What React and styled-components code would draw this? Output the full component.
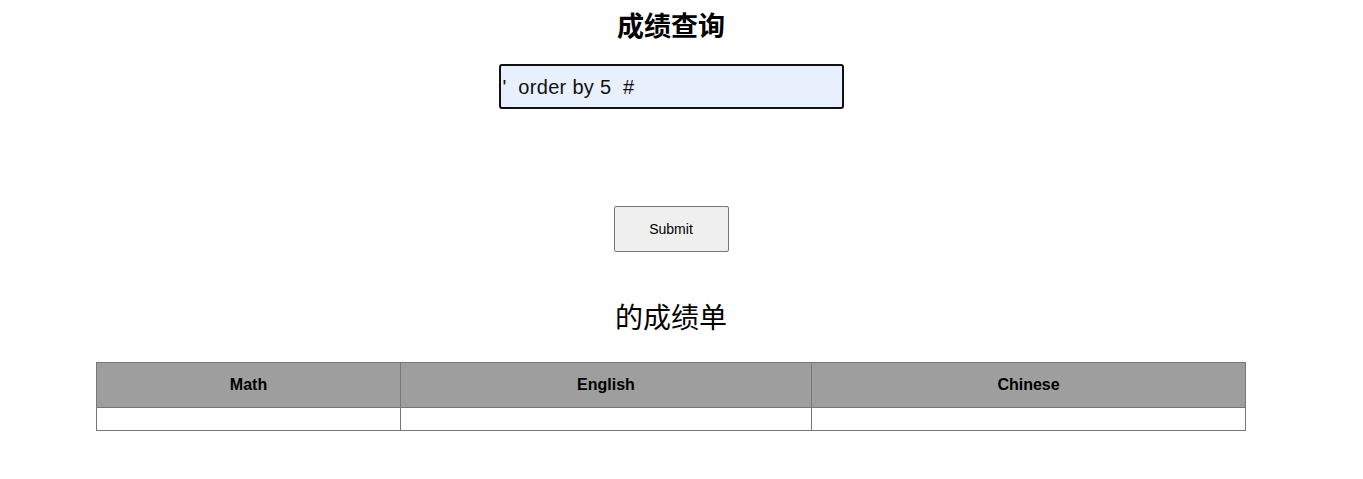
import React from "react";
import styled, { createGlobalStyle } from "styled-components";

const Global = createGlobalStyle`
  html, body { margin: 0; padding: 0; background: #fff; }
  body { font-family: "Liberation Sans", Arial, "Noto Sans CJK SC", sans-serif; color: #000; }
`;

const Page = styled.div`
  width: 1342px;
  display: flex;
  flex-direction: column;
  align-items: center;
`;

const Title = styled.h1`
  margin: 7px 0 0;
  font-family: "Noto Sans CJK SC", sans-serif;
  font-size: 27px;
  font-weight: 700;
  line-height: 36px;
`;

const QueryInput = styled.input`
  box-sizing: border-box;
  margin-top: 21px;
  width: 345px;
  height: 45px;
  padding: 1px 2px 0;
  border: 2px solid #111;
  border-radius: 3px;
  background: #e8f0fe;
  font-family: "Liberation Sans", Arial, sans-serif;
  font-size: 20px;
  letter-spacing: 0.3px;
  color: #111;
  outline: none;
`;

const SubmitButton = styled.button`
  box-sizing: border-box;
  margin-top: 97px;
  width: 115px;
  height: 46px;
  border: 1px solid #767676;
  border-radius: 2px;
  background: #efefef;
  font-family: "Liberation Sans", Arial, sans-serif;
  font-size: 14px;
  color: #000;
`;

const Subtitle = styled.h2`
  margin: 44px 0 0;
  font-family: "Noto Sans CJK SC", sans-serif;
  font-size: 28px;
  font-weight: 400;
  line-height: 40px;
`;

const Table = styled.table`
  margin-top: 26px;
  width: 1149px;
  border-collapse: collapse;
  table-layout: fixed;
`;

const Th = styled.th`
  height: 44px;
  padding: 0;
  background: #9e9e9e;
  border: 1px solid #777;
  font-family: "Liberation Sans", Arial, sans-serif;
  font-size: 16px;
  font-weight: 700;
  text-align: center;
`;

const Td = styled.td`
  height: 22px;
  padding: 0;
  border: 1px solid #777;
`;

const cols = [
  { name: "Math", w: 304 },
  { name: "English", w: 411 },
  { name: "Chinese", w: 434 },
];

export default function App() {
  return (
    <>
      <Global />
      <Page>
        <Title>成绩查询</Title>
        <QueryInput defaultValue="'  order by 5  #" />
        <SubmitButton type="button">Submit</SubmitButton>
        <Subtitle>的成绩单</Subtitle>
        <Table>
          <colgroup>
            {cols.map((c) => (
              <col key={c.name} style={{ width: c.w }} />
            ))}
          </colgroup>
          <thead>
            <tr>
              {cols.map((c) => (
                <Th key={c.name}>{c.name}</Th>
              ))}
            </tr>
          </thead>
          <tbody>
            <tr>
              {cols.map((c) => (
                <Td key={c.name} />
              ))}
            </tr>
          </tbody>
        </Table>
      </Page>
    </>
  );
}
